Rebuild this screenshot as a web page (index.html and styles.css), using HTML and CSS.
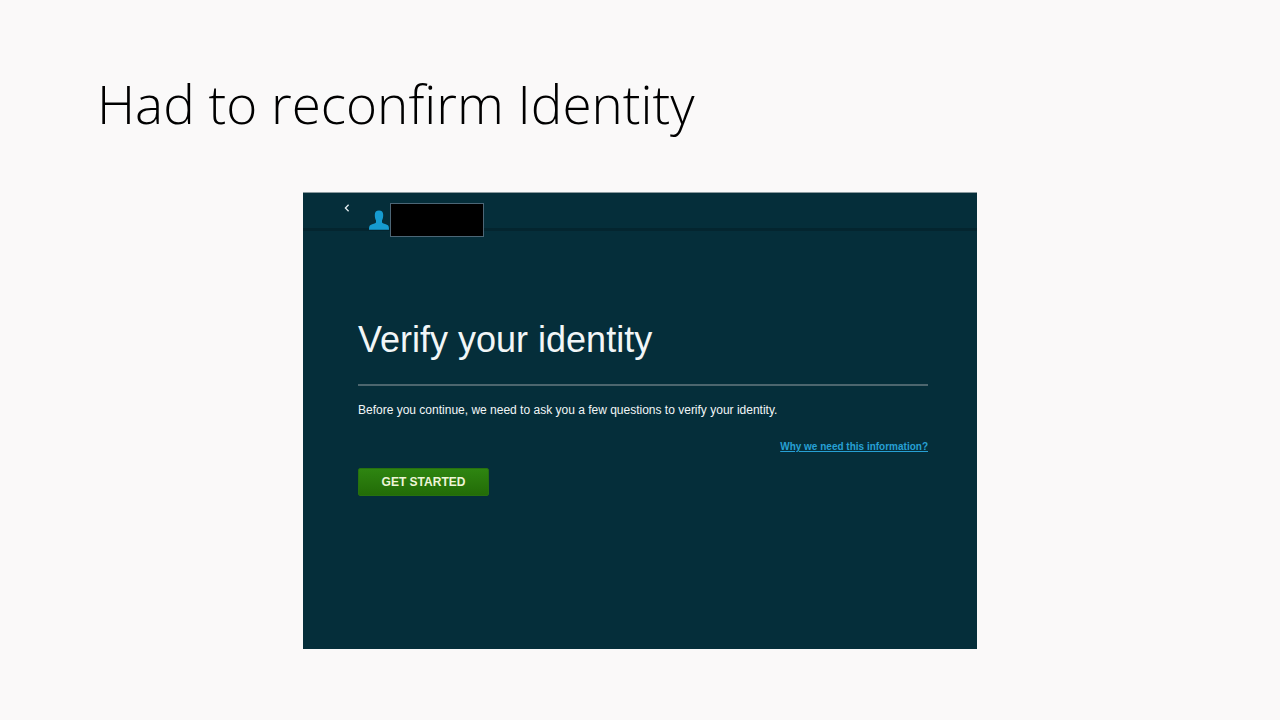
FILE: index.html
```html
<!DOCTYPE html>
<html lang="en">
<head>
    <meta charset="UTF-8">
    <meta name="viewport" content="width=device-width, initial-scale=1.0">
    <title>Had to reconfirm Identity</title>
    <link rel="stylesheet" href="styles.css">
</head>
<body>
    <main class="slide">
        <h1 class="slide-title">Had to reconfirm Identity</h1>

        <section class="panel">
            <header class="panel-header">
                <button class="back-button" type="button" aria-label="Back">
                    <svg width="6" height="8" viewBox="0 0 6 8">
                        <path d="M4.6 0.8 L1.4 4 L4.6 7.2" fill="none" stroke="#e4edf0" stroke-width="1.3"/>
                    </svg>
                </button>
                <svg class="user-icon" width="20" height="20" viewBox="0 0 20 20">
                    <path d="M10 0.5 C7.2 0.5 5.8 2 5.8 4.8 C5.8 7.2 6.2 9 7 10.4 L7 12.6 C6.2 13.6 3.6 14 1.6 15 C0.4 15.7 0 16.6 0 19.8 L20 19.8 C20 16.6 19.6 15.7 18.4 15 C16.4 14 13.8 13.6 13 12.6 L13 10.4 C13.8 9 14.2 7.2 14.2 4.8 C14.2 2 12.8 0.5 10 0.5 Z" fill="#169bd0"/>
                </svg>
                <div class="user-name"></div>
            </header>

            <div class="panel-content">
                <h2>Verify your identity</h2>
                <p>Before you continue, we need to ask you a few questions to verify your identity.</p>
                <a class="info-link" href="#">Why we need this information?</a>
                <button class="start-button" type="button">GET STARTED</button>
            </div>
        </section>
    </main>
</body>
</html>
```
FILE: styles.css
```css
* {
    box-sizing: border-box;
    margin: 0;
    padding: 0;
}

body {
    font-family: "Liberation Sans", Arial, sans-serif;
    background: #faf9f9;
    color: #000;
}

.slide {
    padding: 72px 24px;
}

.slide-title {
    font-family: "Open Sans", sans-serif;
    font-size: 53px;
    font-weight: 300;
    font-variant-ligatures: none;
    line-height: 64px;
    padding: 0 73px;
    margin-bottom: 56px;
}

.panel {
    max-width: 674px;
    margin: 0 auto;
    padding-bottom: 153px;
    background: #052e3a;
    border-top: 1px solid #8b9a9f;
    color: #f2f6f7;
}

.panel-header {
    display: flex;
    align-items: flex-end;
    height: 38px;
    padding-left: 39px;
    border-bottom: 3px solid #04252f;
}

.back-button {
    align-self: flex-start;
    display: flex;
    padding: 11px 2px;
    margin-right: 17px;
    background: none;
    border: none;
    cursor: pointer;
}

.user-icon {
    margin-right: 1px;
    margin-bottom: -2px;
}

/* Hangs a little below the header line */
.user-name {
    width: 94px;
    height: 34px;
    margin-bottom: -9px;
    background: #000;
    border: 1px solid #4c6676;
}

.panel-content {
    display: flex;
    flex-direction: column;
    padding: 88px 49px 0 55px;
}

.panel-content h2 {
    font-size: 36px;
    font-weight: 400;
    line-height: 42px;
    padding-bottom: 23px;
    border-bottom: 2px solid #4d666e;
}

.panel-content p {
    font-size: 12px;
    line-height: 16px;
    margin-top: 16px;
}

.info-link {
    align-self: flex-end;
    margin-top: 21px;
    color: #27a0d4;
    font-size: 10px;
    font-weight: 700;
    line-height: 16px;
}

.start-button {
    align-self: flex-start;
    width: 131px;
    height: 28px;
    margin-top: 13px;
    background: linear-gradient(#2e8511, #236c07);
    border: 1px solid #27700f;
    border-radius: 2px;
    color: #eef5d8;
    font-family: inherit;
    font-size: 12px;
    font-weight: 700;
    cursor: pointer;
}
```
